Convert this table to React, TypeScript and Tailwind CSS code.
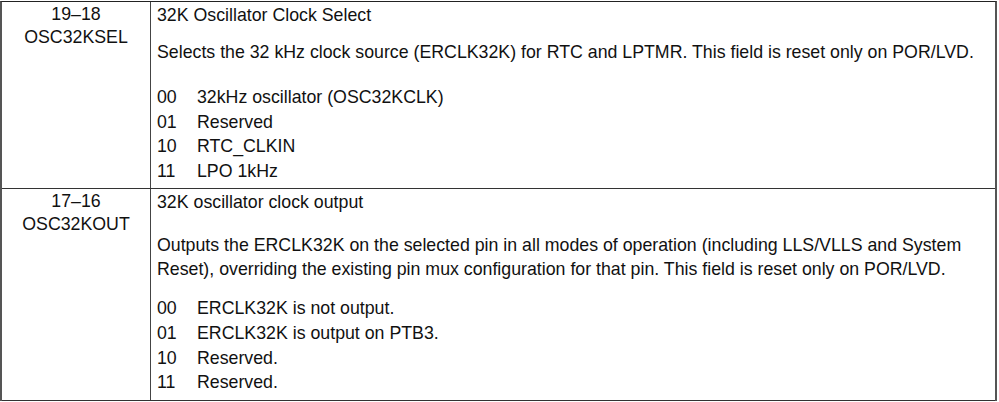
import React from "react";

type Row = {
  bits: string;
  name: string;
  title: string;
  desc: string[];
  values: [string, string][];
  titleGap: string;
  listGap: string;
  pad: string;
};

const rows: Row[] = [
  {
    bits: "19–18",
    name: "OSC32KSEL",
    title: "32K Oscillator Clock Select",
    desc: [
      "Selects the 32 kHz clock source (ERCLK32K) for RTC and LPTMR. This field is reset only on POR/LVD.",
    ],
    values: [
      ["00", "32kHz oscillator (OSC32KCLK)"],
      ["01", "Reserved"],
      ["10", "RTC_CLKIN"],
      ["11", "LPO 1kHz"],
    ],
    titleGap: "mt-[13px]",
    listGap: "mt-[21px]",
    pad: "pb-[5px]",
  },
  {
    bits: "17–16",
    name: "OSC32KOUT",
    title: "32K oscillator clock output",
    desc: [
      "Outputs the ERCLK32K on the selected pin in all modes of operation (including LLS/VLLS and System",
      "Reset), overriding the existing pin mux configuration for that pin. This field is reset only on POR/LVD.",
    ],
    values: [
      ["00", "ERCLK32K is not output."],
      ["01", "ERCLK32K is output on PTB3."],
      ["10", "Reserved."],
      ["11", "Reserved."],
    ],
    titleGap: "mt-[19px]",
    listGap: "mt-[15px]",
    pad: "pb-[5px]",
  },
];

export default function App() {
  return (
    <div className="w-[999px] h-[402px] bg-white pt-px font-['Liberation_Sans',Arial,sans-serif] text-[17.75px] text-[#111]">
      <div className="w-[997px] border-t border-t-[#222] border-x-2 border-x-[#555]">
        {rows.map((r) => (
          <div
            key={r.bits}
            className="grid grid-cols-[148px_1fr] border-b border-b-[#333]"
          >
            <div className="flex flex-col items-center pt-px leading-[23px]">
              <span>{r.bits}</span>
              <span>{r.name}</span>
            </div>
            <div className={`border-l border-l-[#444] pl-[6px] pt-px ${r.pad}`}>
              <p className="leading-[24px]">{r.title}</p>
              <div className={`${r.titleGap} leading-[24px]`}>
                {r.desc.map((d) => (
                  <p key={d} className="whitespace-nowrap">
                    {d}
                  </p>
                ))}
              </div>
              <ul className={r.listGap}>
                {r.values.map(([code, text]) => (
                  <li key={code} className="flex leading-[24.6px]">
                    <span className="w-[40px]">{code}</span>
                    <span>{text}</span>
                  </li>
                ))}
              </ul>
            </div>
          </div>
        ))}
      </div>
    </div>
  );
}
